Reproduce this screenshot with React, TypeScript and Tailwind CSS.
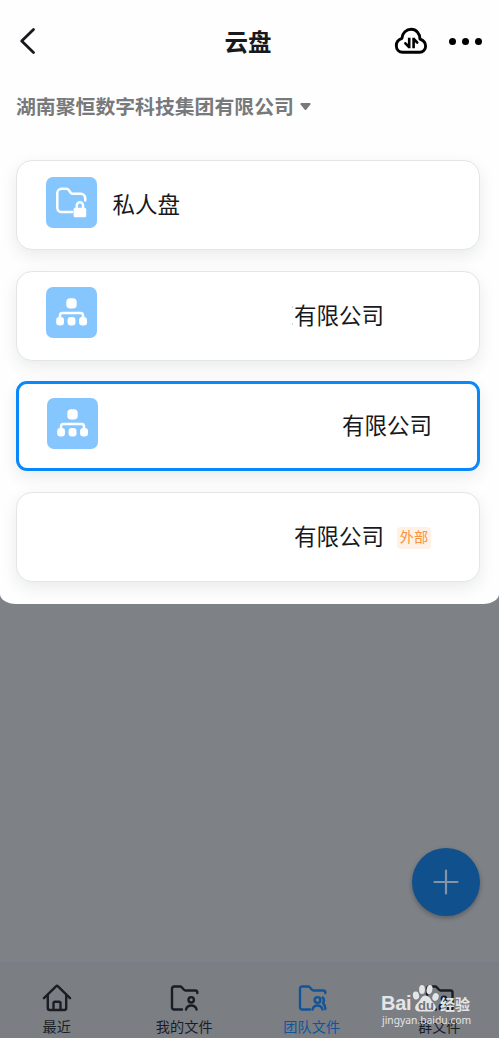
import React from 'react';

const FolderPath = () => (
  <path d="M13 25.500H5A2 2 0 0 1 3 23.500V4.500a2 2 0 0 1 2-2h6.200a2 2 0 0 1 1.500.7l2.300 2.600a2 2 0 0 0 1.500.7H26.300a2 2 0 0 1 2 2v.6" />
);

const HomeIcon = () => (
  <svg width="30" height="30" viewBox="0 0 30 30" fill="none" stroke="currentColor" strokeWidth="2.400" strokeLinecap="round" strokeLinejoin="round">
    <path d="M2 14.200 14 2.300a1.500 1.500 0 0 1 2 0L28 14.200" />
    <path d="M5.800 12v12a2 2 0 0 0 2 2h14.400a2 2 0 0 0 2-2V12" />
    <path d="M11.500 25.500v-6.500a1.200 1.200 0 0 1 1.200-1.200h4.600a1.200 1.200 0 0 1 1.200 1.200v6.500" />
  </svg>
);

const MyFolderIcon = () => (
  <svg width="30" height="30" viewBox="0 0 30 30" fill="none" stroke="currentColor" strokeWidth="2.400" strokeLinecap="round" strokeLinejoin="round">
    <FolderPath />
    <circle cx="22.200" cy="15.800" r="2.700" />
    <path d="M17 25.500c.7-2.600 2.800-4 5.300-4s4.600 1.400 5.300 4" />
  </svg>
);

const TeamFolderIcon = () => (
  <svg width="30" height="30" viewBox="0 0 30 30" fill="none" stroke="currentColor" strokeWidth="2.400" strokeLinecap="round" strokeLinejoin="round">
    <FolderPath />
    <circle cx="20.500" cy="16" r="2.900" />
    <path d="M15.500 25.500c.7-2.600 2.700-4 5-4s4.300 1.400 5 4M25.700 13.500c1.700 1.500 1.700 4 .2 5.500 1.200 1 2.200 3.200 2.500 6" />
  </svg>
);

const GroupFolderIcon = () => (
  <svg width="30" height="30" viewBox="0 0 30 30" fill="none" stroke="currentColor" strokeWidth="2.400" strokeLinecap="round" strokeLinejoin="round">
    <path d="M12 25.500H5a2 2 0 0 1-2-2V4.500a2 2 0 0 1 2-2h6.200a2 2 0 0 1 1.500.7l2.300 2.600a2 2 0 0 0 1.500.7H26.500a2 2 0 0 1 2 2v15a2 2 0 0 1-2 2h-2" />
    <circle cx="20" cy="15" r="2.200" />
    <path d="M15.800 25v-2.500a2 2 0 0 1 2-2h4.400a2 2 0 0 1 2 2V25" />
  </svg>
);

const CloudIcon = () => (
  <svg width="34" height="28" viewBox="0 0 34 28" fill="none" stroke="currentColor" strokeLinejoin="round" strokeLinecap="round">
    <path strokeWidth="2.900" d="M8.800 25.300h16.900a6 6 0 0 0 5.900-6c0-3.500-2.300-6-5.600-7.100C25.900 6.200 22 2.300 17.200 2.300S8.300 6 7.900 11.300C4.700 12.500 2.300 15 2.300 18.500c0 4 2.700 6.800 6.500 6.800Z" />
    <path strokeWidth="2.600" strokeLinecap="butt" d="M15.200 10.800v10.400M19.600 21.200V10.800" />
    <path strokeWidth="2.600" d="m11.400 16.300 3.200 3.300M20.200 12.500l3 3" />
  </svg>
);

const PrivateDiskIcon = () => (
  <svg width="51" height="51" viewBox="0 0 51 51" fill="none" stroke="white" strokeWidth="2.500" strokeLinecap="round" strokeLinejoin="round">
    <path d="M26 35H15.500a4.200 4.200 0 0 1-4.200-4.200V16a4.200 4.200 0 0 1 4.200-4.200H20.500a2.500 2.500 0 0 1 2 1l2.200 3a2.500 2.500 0 0 0 2 1H35a4.200 4.200 0 0 1 4.200 4.200v2.500" />
    <rect x="27.600" y="30.700" width="12.600" height="9.600" rx="1.500" fill="white" stroke="none" />
    <path d="M30.800 31.500v-3.200a3.100 3.100 0 0 1 6.200 0v3.200" />
  </svg>
);

const OrgIcon = () => (
  <svg width="51" height="51" viewBox="0 0 51 51" fill="white">
    <rect x="20.300" y="11.200" width="10.400" height="10.400" rx="3.800" />
    <path d="M14 31v-2.700a2.500 2.500 0 0 1 2.500-2.300h18a2.500 2.500 0 0 1 2.500 2.300V31" fill="none" stroke="white" strokeWidth="2.500" />
    <rect x="10.200" y="30" width="7.800" height="8.400" rx="3.200" />
    <rect x="21.600" y="30" width="7.900" height="8.400" rx="3.200" />
    <rect x="33.100" y="30" width="7.900" height="8.400" rx="3.200" />
  </svg>
);

const tabs = [
  { label: '最近', icon: HomeIcon, active: false },
  { label: '我的文件', icon: MyFolderIcon, active: false },
  { label: '团队文件', icon: TeamFolderIcon, active: true },
  { label: '群文件', icon: GroupFolderIcon, active: false },
];

const cardClass = 'flex h-[90px] items-center rounded-[16px] border-[1.500px] border-[#e3e5e7] bg-white shadow-[0_6px_16px_rgba(30,40,50,0.09)]';
const iconClass = 'mb-[6px] h-[51px] w-[51px] shrink-0 rounded-[7px] bg-[#86c6ff]';
const nameClass = 'mb-1 text-[22.500px] leading-8 text-[#17191c]';

export default function App() {
  return (
    <div className="flex h-[1038px] w-[499px] flex-col overflow-hidden bg-[#7e8287] font-['Noto_Sans_CJK_SC',sans-serif] text-[#17191c]">
      <div className="h-[604px] shrink-0 overflow-hidden rounded-b-[16px_10px] bg-[#fefefe]">
        <header className="flex h-[82px] items-center justify-between pr-[17px] pl-[19px]">
          <button className="w-[84px]" aria-label="返回">
            <svg width="18" height="28" viewBox="0 0 18 28" fill="none" stroke="currentColor" strokeWidth="2.800" strokeLinecap="round" strokeLinejoin="round">
              <path d="M14.500 2.500 2.700 14l11.800 11.500" />
            </svg>
          </button>
          <h1 className="mt-0.5 -ml-[2px] text-[23.500px] font-bold">云盘</h1>
          <div className="flex w-[87px] items-center justify-between text-black">
            <span className="-ml-px"><CloudIcon /></span>
            <div className="flex gap-[6px]">
              <i className="h-[7px] w-[7px] rounded-full bg-black" />
              <i className="h-[7px] w-[7px] rounded-full bg-black" />
              <i className="h-[7px] w-[7px] rounded-full bg-black" />
            </div>
          </div>
        </header>

        <div className="flex h-[78px] items-start px-4 pt-[9px] text-[#77797b]">
          <span className="text-[19.850px] leading-[30px] font-bold">湖南聚恒数字科技集团有限公司</span>
          <svg className="mt-3 ml-[6px]" width="11" height="8" viewBox="0 0 11 8" fill="currentColor">
            <path d="M1 0h9q1 .5.400 1.500l-4 5q-.9 1-1.800 0l-4-5Q0 .5 1 0Z" />
          </svg>
        </div>

        <div className="flex flex-col gap-[20.500px] pr-[19px] pl-4">
          <div className={cardClass}>
            <div className={`${iconClass} ml-[28.500px]`}><PrivateDiskIcon /></div>
            <span className={`${nameClass} ml-4`}>私人盘</span>
          </div>
          <div className={cardClass}>
            <div className={`${iconClass} ml-[28.500px]`}><OrgIcon /></div>
            <div className="ml-auto flex items-center pr-[95px]">
              <span className="mr-px -ml-px flex h-[19px] w-px flex-col justify-between">
                <i className="h-[2px] bg-gray-300" />
                <i className="h-[2px] bg-gray-300" />
              </span>
              <span className={nameClass}>有限公司</span>
            </div>
          </div>
          <div className="flex h-[90px] items-center rounded-[11px] border-[3px] border-[#0888fb] bg-white shadow-[0_6px_16px_rgba(30,40,50,0.09)]">
            <div className={`${iconClass} ml-7`}><OrgIcon /></div>
            <span className={`${nameClass} ml-auto pr-[45px]`}>有限公司</span>
          </div>
          <div className={`${cardClass} justify-end pr-12`}>
            <span className={nameClass}>有限公司</span>
            <span className="mt-[2px] ml-[13px] flex h-[22px] w-[34px] items-center justify-center rounded-[4px] bg-[#fff1e5] pb-px text-[14.200px] text-[#fa923c]">外部</span>
          </div>
        </div>
      </div>

      <main className="flex flex-1 items-end justify-end pr-[19px] pb-[46px]">
        <button className="flex h-[68px] w-[68px] items-center justify-center rounded-full bg-[#0f508d] shadow-[0_2px_5px_rgba(0,0,0,0.3)]" aria-label="新建">
          <svg width="26" height="26" viewBox="0 0 26 26" stroke="#8294a6" strokeWidth="2.200" strokeLinecap="round">
            <path d="M13 1.500v23M1.500 13h23" />
          </svg>
        </button>
      </main>

      <nav className="relative flex h-[76px] shrink-0 border-t-4 border-[#797d87] bg-[#7b7f84] text-[#1a1d24]">
        {tabs.map(({ label, icon: Icon, active }, i) => (
          <div key={label} className={`flex w-[127.500px] shrink-0 flex-col items-center pt-[18px] ${i === 0 ? '-ml-[7px]' : ''} ${active ? 'text-[#12549a]' : ''}`}>
            <Icon />
            <span className="mt-[2px] text-[14.200px] leading-5">{label}</span>
          </div>
        ))}

        {/* Watermark */}
        <div className="absolute top-[17px] left-[381px] w-[92px] text-[#e4e5e6]">
          <div className="relative flex h-[31px] items-end">
            <span className="pb-px font-['Liberation_Sans',sans-serif] text-[20px] leading-[20px] font-bold tracking-[-0.3px]">Bai</span>
            <svg className="absolute top-0 left-[31px]" width="28" height="30" viewBox="0 0 28 30" fill="currentColor">
              <ellipse cx="4" cy="12.500" rx="3.100" ry="4" transform="rotate(-12 4 12.500)" />
              <ellipse cx="10" cy="6.500" rx="2.900" ry="4.500" />
              <ellipse cx="17.500" cy="6.500" rx="2.900" ry="4.500" transform="rotate(12 17.500 6.500)" />
              <ellipse cx="23.500" cy="14" rx="3.100" ry="4" transform="rotate(18 23.500 14)" />
              <path d="M13.500 12.500c4 0 5 4 7 6.500 2.500 2.500 4 4.500 3 7.200-1.300 2.800-5 2.300-10 2.300S4.500 29 3.300 26.200C2.500 23.500 4 21.500 6.500 19c2.500-2.500 3-6.500 7-6.500Z" />
            </svg>
            <span className="absolute bottom-[1px] left-[37px] font-['Liberation_Sans',sans-serif] text-[13px] leading-[15px] font-bold text-[#6e7379]">du</span>
            <span className="absolute bottom-0 left-[59px] text-[15px] leading-[20px] font-bold">经验</span>
          </div>
          <div className="-mt-px w-max pl-px font-['Noto_Sans',sans-serif] text-[10.300px] leading-[14px]">jingyan.baidu.com</div>
        </div>
      </nav>
    </div>
  );
}
